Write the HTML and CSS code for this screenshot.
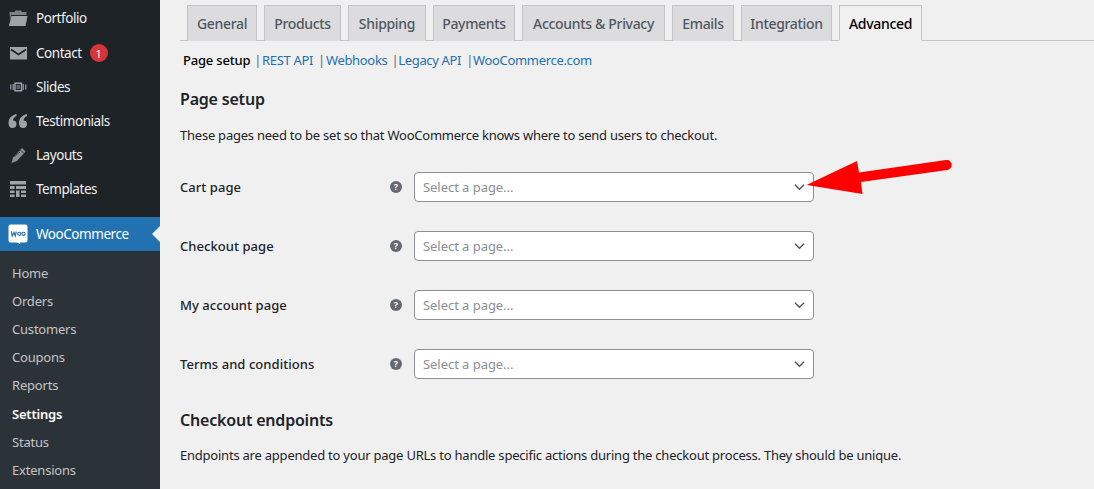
FILE: index.html
```html
<!DOCTYPE html>
<html lang="en">
<head>
<meta charset="utf-8">
<title>WooCommerce settings</title>
<link rel="stylesheet" href="styles.css">
</head>
<body>
<div class="app">
  <nav class="sidebar">
    <ul class="menu">
      <li class="menu-item"><svg class="mi" viewBox="0 0 20 20"><path d="M1.500 4h5l1-1.500h5.500l1 1.500h4.500v3H3L2 13z" fill="#7d8186"/><path d="M3.500 8h16L17.500 18H0.800z" fill="#9ea3a8"/></svg><span>Portfolio</span></li>
      <li class="menu-item"><svg class="mi" viewBox="0 0 20 20"><rect x="2" y="4" width="17" height="12.500" fill="#9ea3a8"/><path d="M3 6.500l7.500 5 7.500-5" fill="none" stroke="#1d2327" stroke-width="1.800"/></svg><span>Contact</span><b class="badge">1</b></li>
      <li class="menu-item"><svg class="mi" viewBox="0 0 20 20"><path d="M2 7.500h1.500v5H2zM4.500 7h1.500v6H4.500zM14.500 7H16v6h-1.500zM17 7.500h1.500v5H17z" fill="#8a7f96"/><path d="M7 6.300h6.500v7.400H7z" fill="none" stroke="#9ea3a8" stroke-width="1.400"/><path d="M8.500 9h3.500M8.500 11h3.500" stroke="#9ea3a8" stroke-width="1"/></svg><span>Slides</span></li>
      <li class="menu-item"><svg class="mi" viewBox="0 0 20 20"><path d="M8.500 3C4 4 .5 7 .5 12c0 3 1.500 5 4 5s4-1.500 4-4-1.500-3.500-3.500-3.500c0-2 1.500-3.500 3.500-4.500zM19 3c-4.500 1-8 4-8 9 0 3 1.500 5 4 5s4-1.500 4-4-1.500-3.500-3.500-3.500c0-2 1.500-3.500 3.500-4.500z" fill="#9ea3a8"/></svg><span>Testimonials</span></li>
      <li class="menu-item"><svg class="mi" viewBox="0 0 20 20"><path d="M14 3l3.500 3.500-8.500 9.500-5.500 2 1.500-5.500z" fill="#8b8f96"/><path d="M12.500 5l3.500 3.500M6.500 11.500L12 7" stroke="#1d2327" stroke-width=".8"/></svg><span>Layouts</span></li>
      <li class="menu-item"><svg class="mi" viewBox="0 0 20 20"><path d="M2 2h16v3.500H2zM2 7h4.500v3H2zM8 7h10v3H8zM2 11.500h4.500V14H2zM8 11.500h3.500V18H8zM13 11.500h5V14h-5zM2 15.500h4.500V18H2zM13 15.500h5V18h-5z" fill="#9ea3a8"/></svg><span>Templates</span></li>
      <li class="menu-item menu-current"><svg class="mi" viewBox="0 0 20 20"><path d="M2.500 .5h15A2 2 0 0 1 19.500 2.500v14a2 2 0 0 1-2 2H12l.3 2-3-2H2.500a2 2 0 0 1-2-2v-14a2 2 0 0 1 2-2z" fill="#fff"/><path d="M3.300 7.500l1 4.500L6 8.500l1.300 3.500L8.300 7.500" fill="none" stroke="#2271b1" stroke-width="1.200"/><circle cx="11.300" cy="9.800" r="1.600" fill="none" stroke="#2271b1" stroke-width="1.100"/><circle cx="15.500" cy="9.800" r="1.600" fill="none" stroke="#2271b1" stroke-width="1.100"/></svg><span>WooCommerce</span></li>
    </ul>
    <ul class="submenu">
      <li>Home</li>
      <li>Orders</li>
      <li>Customers</li>
      <li>Coupons</li>
      <li>Reports</li>
      <li class="sub-current">Settings</li>
      <li>Status</li>
      <li>Extensions</li>
    </ul>
  </nav>
  <main class="content">
    <div class="tabs">
      <a class="tab w-general">General</a>
      <a class="tab w-products">Products</a>
      <a class="tab w-shipping">Shipping</a>
      <a class="tab w-payments">Payments</a>
      <a class="tab w-accounts">Accounts &amp; Privacy</a>
      <a class="tab w-emails">Emails</a>
      <a class="tab w-integration">Integration</a>
      <a class="tab tab-active w-advanced">Advanced</a>
    </div>
    <div class="subnav">
      <span class="sub-on">Page setup</span><span class="sep s1">|</span><a>REST API</a><span class="sep s2">|</span><a>Webhooks</a><span class="sep s3">|</span><a>Legacy API</a><span class="sep s4">|</span><a>WooCommerce.com</a>
    </div>
    <h2 class="h-first">Page setup</h2>
    <p class="desc">These pages need to be set so that WooCommerce knows where to send users to checkout.</p>
    <div class="form">
      <div class="row"><label>Cart page</label><i class="help">?</i><div class="select"><span>Select a page...</span><svg class="chev" viewBox="0 0 12 8"><path d="M1 1.500l5 5 5-5" fill="none" stroke="#50575e" stroke-width="1.500"/></svg></div></div>
      <div class="row"><label>Checkout page</label><i class="help">?</i><div class="select"><span>Select a page...</span><svg class="chev" viewBox="0 0 12 8"><path d="M1 1.500l5 5 5-5" fill="none" stroke="#50575e" stroke-width="1.500"/></svg></div></div>
      <div class="row"><label>My account page</label><i class="help">?</i><div class="select"><span>Select a page...</span><svg class="chev" viewBox="0 0 12 8"><path d="M1 1.500l5 5 5-5" fill="none" stroke="#50575e" stroke-width="1.500"/></svg></div></div>
      <div class="row"><label>Terms and conditions</label><i class="help">?</i><div class="select"><span>Select a page...</span><svg class="chev" viewBox="0 0 12 8"><path d="M1 1.500l5 5 5-5" fill="none" stroke="#50575e" stroke-width="1.500"/></svg></div></div>
    </div>
    <h2 class="h-second">Checkout endpoints</h2>
    <p class="desc desc-second">Endpoints are appended to your page URLs to handle specific actions during the checkout process. They should be unique.</p>
  </main>
  <svg class="arrow" viewBox="0 0 160 50"><path d="M5.500 25L56 1l2 11.500 87-12.500a5 5 0 0 1 1.400 10L60 22l1.500 12z" fill="#ff0000"/></svg>
</div>
</body>
</html>
```
FILE: styles.css
```css
* { box-sizing: border-box; }
html, body { margin: 0; padding: 0; height: 489px; overflow: hidden; }
body { background: #f0f0f1; font-family: "Noto Sans", "Open Sans", sans-serif; font-size: 13px; color: #1d2327; }
ul { list-style: none; margin: 0; padding: 0; }
.app { display: flex; height: 489px; position: relative; overflow: hidden; }

.sidebar { width: 160px; flex: none; background: #1d2327; padding-top: 1.300px; height: 489px; overflow: hidden; }
.menu-item { display: flex; align-items: center; height: 34.170px; color: #f0f0f1; font-size: 13.500px; letter-spacing: -.45px; padding-left: 8px; }
.mi { width: 20px; height: 20px; flex: none; margin-right: 8px; }
.badge { width: 18px; height: 18px; margin: 1px 0 0 8px; border-radius: 50%; background: #d63638; color: #fff; font-size: 11px; font-weight: 400; letter-spacing: 0; display: flex; align-items: center; justify-content: center; }
.menu-current { height: 34px; background: #2271b1; color: #fff; margin-top: 10.800px; position: relative; }
.menu-current::after { content: ""; position: absolute; right: 0; top: 50%; margin-top: -8px; border: 8px solid transparent; border-right-color: #f0f0f1; border-left-width: 0; }
.submenu { background: #2c3338; padding: 8px 0 0; height: 238px; }
.submenu li { height: 28.120px; line-height: 28px; padding-left: 12px; color: #c3c4c7; font-size: 13px; letter-spacing: -.2px; }
.submenu .sub-current { color: #fff; font-weight: 600; }

.content { flex: 1; min-width: 0; padding: 5px 0 0 20px; }
.tabs { display: flex; gap: 7px; padding-left: 7px; height: 36px; border-bottom: 1px solid #c3c4c7; }
.tab { height: 36px; display: flex; align-items: center; justify-content: center; background: #dcdcde; border: 1px solid #c3c4c7; border-bottom: 0; color: #50575e; font-size: 14px; font-weight: 500; letter-spacing: -.32px; }
.tab-active { background: #f0f0f1; color: #000; border-bottom: 1px solid #f0f0f1; }
.w-general { width: 70px; } .w-products { width: 77px; } .w-shipping { width: 78px; } .w-payments { width: 82px; }
.w-accounts { width: 143px; } .w-emails { width: 62px; } .w-integration { width: 91px; } .w-advanced { width: 83px; }

.subnav { display: flex; align-items: center; height: 20px; margin-top: 9px; padding-left: 3px; font-size: 13px; letter-spacing: -.33px; color: #646970; }
.subnav a { color: #2271b1; }
.sub-on { color: #000; font-weight: 500; letter-spacing: -.2px; }
.sep { margin: 0; }
.s1 { margin-left: 4px; margin-right: 1px; } .s2 { margin-left: 5px; margin-right: 1px; } .s3 { margin-left: 4px; } .s4 { margin-left: 5px; }

h2 { margin: 0; font-size: 16px; font-weight: 600; line-height: 22px; letter-spacing: -.2px; color: #1d2327; }
.h-first { margin-top: 18px; }
.desc { margin: 15px 0 0; line-height: 20px; letter-spacing: -.235px; }

.form { margin-top: 27px; display: flex; flex-direction: column; gap: 29px; }
.row { display: flex; align-items: center; height: 30px; }
.row label { width: 210px; font-size: 13px; font-weight: 500; letter-spacing: .05px; }
.help { width: 12px; height: 12px; margin-right: 12px; border-radius: 50%; background: #646970; color: #fff; font: 700 9px/12px "Noto Sans", sans-serif; text-align: center; flex: none; }
.select { width: 400px; height: 30px; background: #fff; border: 1px solid #8c8f94; border-radius: 4px; display: flex; align-items: center; justify-content: space-between; padding: 0 8px; color: #8c8f94; letter-spacing: -.05px; }
.chev { width: 11px; height: 8px; flex: none; }

.h-second { margin-top: 30px; }
.desc-second { margin-top: 14px; letter-spacing: -.225px; }

.arrow { position: absolute; left: 801px; top: 160px; width: 160px; height: 50px; }
```
